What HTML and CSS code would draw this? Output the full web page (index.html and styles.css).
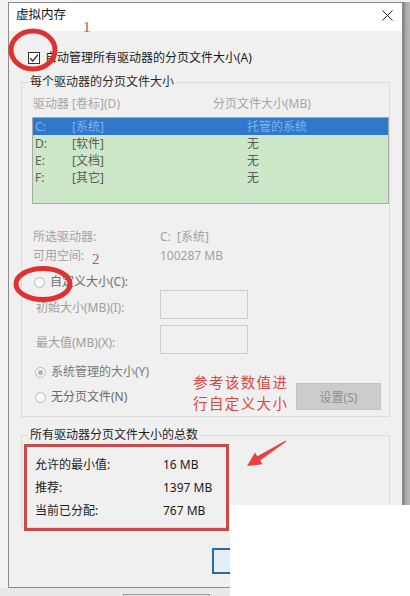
FILE: index.html
```html
<!DOCTYPE html>
<html>
  <head>
    <title>虚拟内存</title>
    <link rel="stylesheet" href="styles.css">
  </head>
  <body>
    <div class="screen">
      <div class="top-row">
        <div class="left-gap"></div>

        <div class="dialog">
          <div class="titlebar">
            <span class="title">虚拟内存</span>
            <svg class="close-icon" width="11" height="11" viewBox="0 0 11 11">
              <path d="M0.5 0.5 L10.5 10.5 M10.5 0.5 L0.5 10.5" stroke="#222" stroke-width="1" fill="none"/>
            </svg>
          </div>

          <div class="content">
            <div class="check-row">
              <span class="checkbox">
                <svg width="10" height="10" viewBox="0 0 10 10">
                  <path d="M1 5.2 L3.8 8 L9 1.6" stroke="#222" stroke-width="1.2" fill="none"/>
                </svg>
              </span>
              自动管理所有驱动器的分页文件大小(A)
            </div>

            <fieldset class="group group-drives">
              <legend>每个驱动器的分页文件大小</legend>

              <div class="list-head">
                <span>驱动器 [卷标](D)</span>
                <span>分页文件大小(MB)</span>
              </div>

              <div class="drive-list">
                <div class="drive-row selected"><span>C:</span><span>[系统]</span><span>托管的系统</span></div>
                <div class="drive-row"><span>D:</span><span>[软件]</span><span>无</span></div>
                <div class="drive-row"><span>E:</span><span>[文档]</span><span>无</span></div>
                <div class="drive-row"><span>F:</span><span>[其它]</span><span>无</span></div>
              </div>

              <div class="info-row"><span>所选驱动器:</span><span>C:&nbsp;&nbsp;[系统]</span></div>
              <div class="info-row"><span>可用空间:</span><span>100287 MB</span></div>

              <div class="radio-row custom-radio"><span class="radio"></span>自定义大小(C):</div>

              <div class="size-row"><span>初始大小(MB)(I):</span><span class="size-input"></span></div>
              <div class="size-row second"><span>最大值(MB)(X):</span><span class="size-input"></span></div>

              <div class="bottom-row">
                <div class="radio-col">
                  <div class="radio-row system-radio"><span class="radio checked"></span>系统管理的大小(Y)</div>
                  <div class="radio-row none-radio"><span class="radio"></span>无分页文件(N)</div>
                </div>
                <button class="set-button">设置(S)</button>
              </div>
            </fieldset>

            <fieldset class="group group-total">
              <legend>所有驱动器分页文件大小的总数</legend>
              <div class="total-row first"><span>允许的最小值:</span><span>16 MB</span></div>
              <div class="total-row"><span>推荐:</span><span>1397 MB</span></div>
              <div class="total-row"><span>当前已分配:</span><span>767 MB</span></div>
            </fieldset>

            <div class="dialog-buttons">
              <button class="ok-button">确定</button>
              <button class="plain-button">取消</button>
            </div>
          </div>
        </div>

        <div class="side-strip"></div>
      </div>

      <div class="bottom-strip">
        <div class="bottom-box"></div>
      </div>
    </div>

    <!-- red marks drawn over the screenshot -->
    <svg class="marks" width="410" height="596" viewBox="0 0 410 596">
      <ellipse cx="33" cy="50" rx="22" ry="19" stroke="#e0302f" stroke-width="5" fill="none"/>
      <ellipse cx="43" cy="284" rx="27" ry="15.5" stroke="#e0302f" stroke-width="5" fill="none"/>
      <rect x="25.5" y="445.5" width="202" height="84" stroke="#c94a4c" stroke-width="3" fill="none"/>
      <polygon points="247,466 262.6,464.3 260.2,460.5 286.3,441.4 285.7,440.6 257.4,456.3 255,452.5" fill="#e8413f"/>
    </svg>
    <span class="mark-number mark-one">1</span>
    <span class="mark-number mark-two">2</span>
    <div class="mark-note">参考该数值进<br>行自定义大小</div>
    <div class="cover"></div>
  </body>
</html>
```

FILE: styles.css
```css
body {
  margin: 0;
  background-color: #f2f2f2;
  font-family: "Noto Sans", "Noto Sans CJK SC", sans-serif;
  font-size: 12px;
  color: #222;
}

.screen {
  width: 410px;
  height: 596px;
  overflow: hidden;
  display: flex;
  flex-direction: column;
}

.top-row {
  display: flex;
  padding-top: 2px;
}

.left-gap {
  width: 8px;
  flex-shrink: 0;
}

.dialog {
  width: 395px;
  height: 586px;
  box-sizing: border-box;
  border: 1px solid #8c8c8c;
  background-color: #f0f0f0;
  flex-shrink: 0;
}

.side-strip {
  width: 7px;
  flex-shrink: 0;
  background: linear-gradient(to right, #7d7d7d, #a9a9a9 40%, #b8b8b8);
}

.bottom-strip {
  height: 8px;
  background-color: #e9e9e9;
  padding-left: 123px;
}

.bottom-box {
  width: 85px;
  height: 4px;
  margin-top: 6px;
  border: 1px solid #9a9a9a;
  border-bottom: none;
}

.titlebar {
  height: 28px;
  background-color: white;
  display: flex;
  justify-content: space-between;
  align-items: center;
  padding: 0 9px 0 7px;
}

.title {
  font-size: 12.5px;
  line-height: 16px;
  margin-top: -4px;
  color: #111;
}

.close-icon {
  margin-top: -4px;
}

.check-row {
  height: 18px;
  line-height: 18px;
  margin-top: 18px;
  padding-left: 19px;
  display: flex;
  align-items: center;
  color: #1a1a1a;
}

.checkbox {
  width: 12px;
  height: 12px;
  box-sizing: border-box;
  border: 1px solid #333;
  background-color: white;
  margin-right: 5px;
  display: flex;
  align-items: center;
  justify-content: center;
}

.group {
  margin: 7px 0 0 12px;
  width: 369px;
  box-sizing: border-box;
  padding: 0 0 6px 0;
  border: 1px solid #dcdcdc;
  min-width: 0;
}

.group legend {
  padding: 0 2px;
  margin-left: 6px;
  line-height: 16px;
  color: #2a2a2a;
}

.list-head {
  display: grid;
  grid-template-columns: 180px auto;
  padding-left: 11px;
  margin-top: 6px;
  height: 16px;
  line-height: 16px;
  color: #a6a6a6;
}

.drive-list {
  margin: 5px 0 0 10px;
  width: 357px;
  height: 87px;
  box-sizing: border-box;
  border: 1px solid #a8a8a8;
  background-color: #cce8c9;
}

.drive-row {
  display: grid;
  grid-template-columns: 37px 175px auto;
  padding-left: 2px;
  height: 17px;
  line-height: 17px;
  color: #5c5c5c;
}

.drive-row.selected {
  background-color: #2f78cc;
  color: #82b3ea;
}

.info-row {
  display: grid;
  grid-template-columns: 127px auto;
  padding-left: 11px;
  height: 19px;
  line-height: 19px;
  color: #a2a2a2;
}

.drive-list + .info-row {
  margin-top: 23px;
}

.radio-row {
  display: flex;
  align-items: center;
  height: 16px;
  line-height: 16px;
  color: #7a7a7a;
}

.radio {
  width: 11px;
  height: 11px;
  box-sizing: border-box;
  border: 1px solid #b9b9b9;
  border-radius: 50%;
  background-color: #f7f7f7;
  margin-right: 5px;
  display: flex;
  align-items: center;
  justify-content: center;
}

.radio.checked::after {
  content: "";
  width: 5px;
  height: 5px;
  border-radius: 50%;
  background-color: #b3b3b3;
}

.custom-radio {
  margin-top: 9px;
  padding-left: 12px;
  color: #6e6e6e;
}

.size-row {
  display: grid;
  grid-template-columns: 124px 88px;
  padding-left: 14px;
  height: 29px;
  align-items: center;
  color: #9e9e9e;
}

.size-row span:first-child {
  padding-top: 4px;
}

.size-row.second {
  margin-top: 6px;
}

.size-input {
  height: 29px;
  box-sizing: border-box;
  border: 1px solid #cdcdcd;
  background-color: #f0f0f0;
}

.bottom-row {
  display: flex;
  justify-content: space-between;
  margin-top: 10px;
  padding-right: 8px;
}

.radio-col {
  padding-left: 13px;
  display: flex;
  flex-direction: column;
  gap: 9px;
}

.system-radio {
  color: #787878;
}

.none-radio {
  color: #6a6a6a;
}

.set-button {
  width: 85px;
  height: 27px;
  margin-top: 19px;
  background-color: #cccccc;
  border: 1px solid #c2c2c2;
  font-family: "Noto Sans", "Noto Sans CJK SC", sans-serif;
  font-size: 12px;
  color: #8f8f8f;
  padding: 0;
}

.group-total {
  margin-top: 10px;
  padding-bottom: 5px;
}

.group-total legend {
  color: #1e1e1e;
}

.total-row {
  display: grid;
  grid-template-columns: 128px auto;
  padding-left: 13px;
  height: 23px;
  line-height: 23px;
  color: #1c1c1c;
}

.total-row.first {
  margin-top: 10px;
}

.dialog-buttons {
  display: flex;
  gap: 6px;
  margin-top: 20px;
  padding-left: 203px;
}

.ok-button,
.plain-button {
  width: 75px;
  height: 26px;
  font-family: "Noto Sans", "Noto Sans CJK SC", sans-serif;
  font-size: 12px;
  padding: 0;
}

.ok-button {
  border: 2px solid #2d6aa5;
  background-color: #e3eef9;
}

.plain-button {
  border: 1px solid #adadad;
  background-color: #e1e1e1;
}

/* annotations on top of the screenshot */
.marks {
  position: absolute;
  left: 0;
  top: 0;
  pointer-events: none;
}

.mark-number {
  position: absolute;
  font-family: "Liberation Serif", serif;
  font-size: 15px;
  line-height: 15px;
  color: #c8504c;
}

.mark-one {
  left: 83px;
  top: 20px;
}

.mark-two {
  left: 92px;
  top: 252px;
}

.mark-note {
  position: absolute;
  left: 193px;
  top: 371px;
  font-family: "Noto Sans CJK SC", sans-serif;
  font-size: 14.5px;
  letter-spacing: 1.4px;
  line-height: 21px;
  color: #d9473f;
}

.cover {
  position: absolute;
  left: 230px;
  top: 505px;
  width: 180px;
  height: 91px;
  background-color: white;
}
```
